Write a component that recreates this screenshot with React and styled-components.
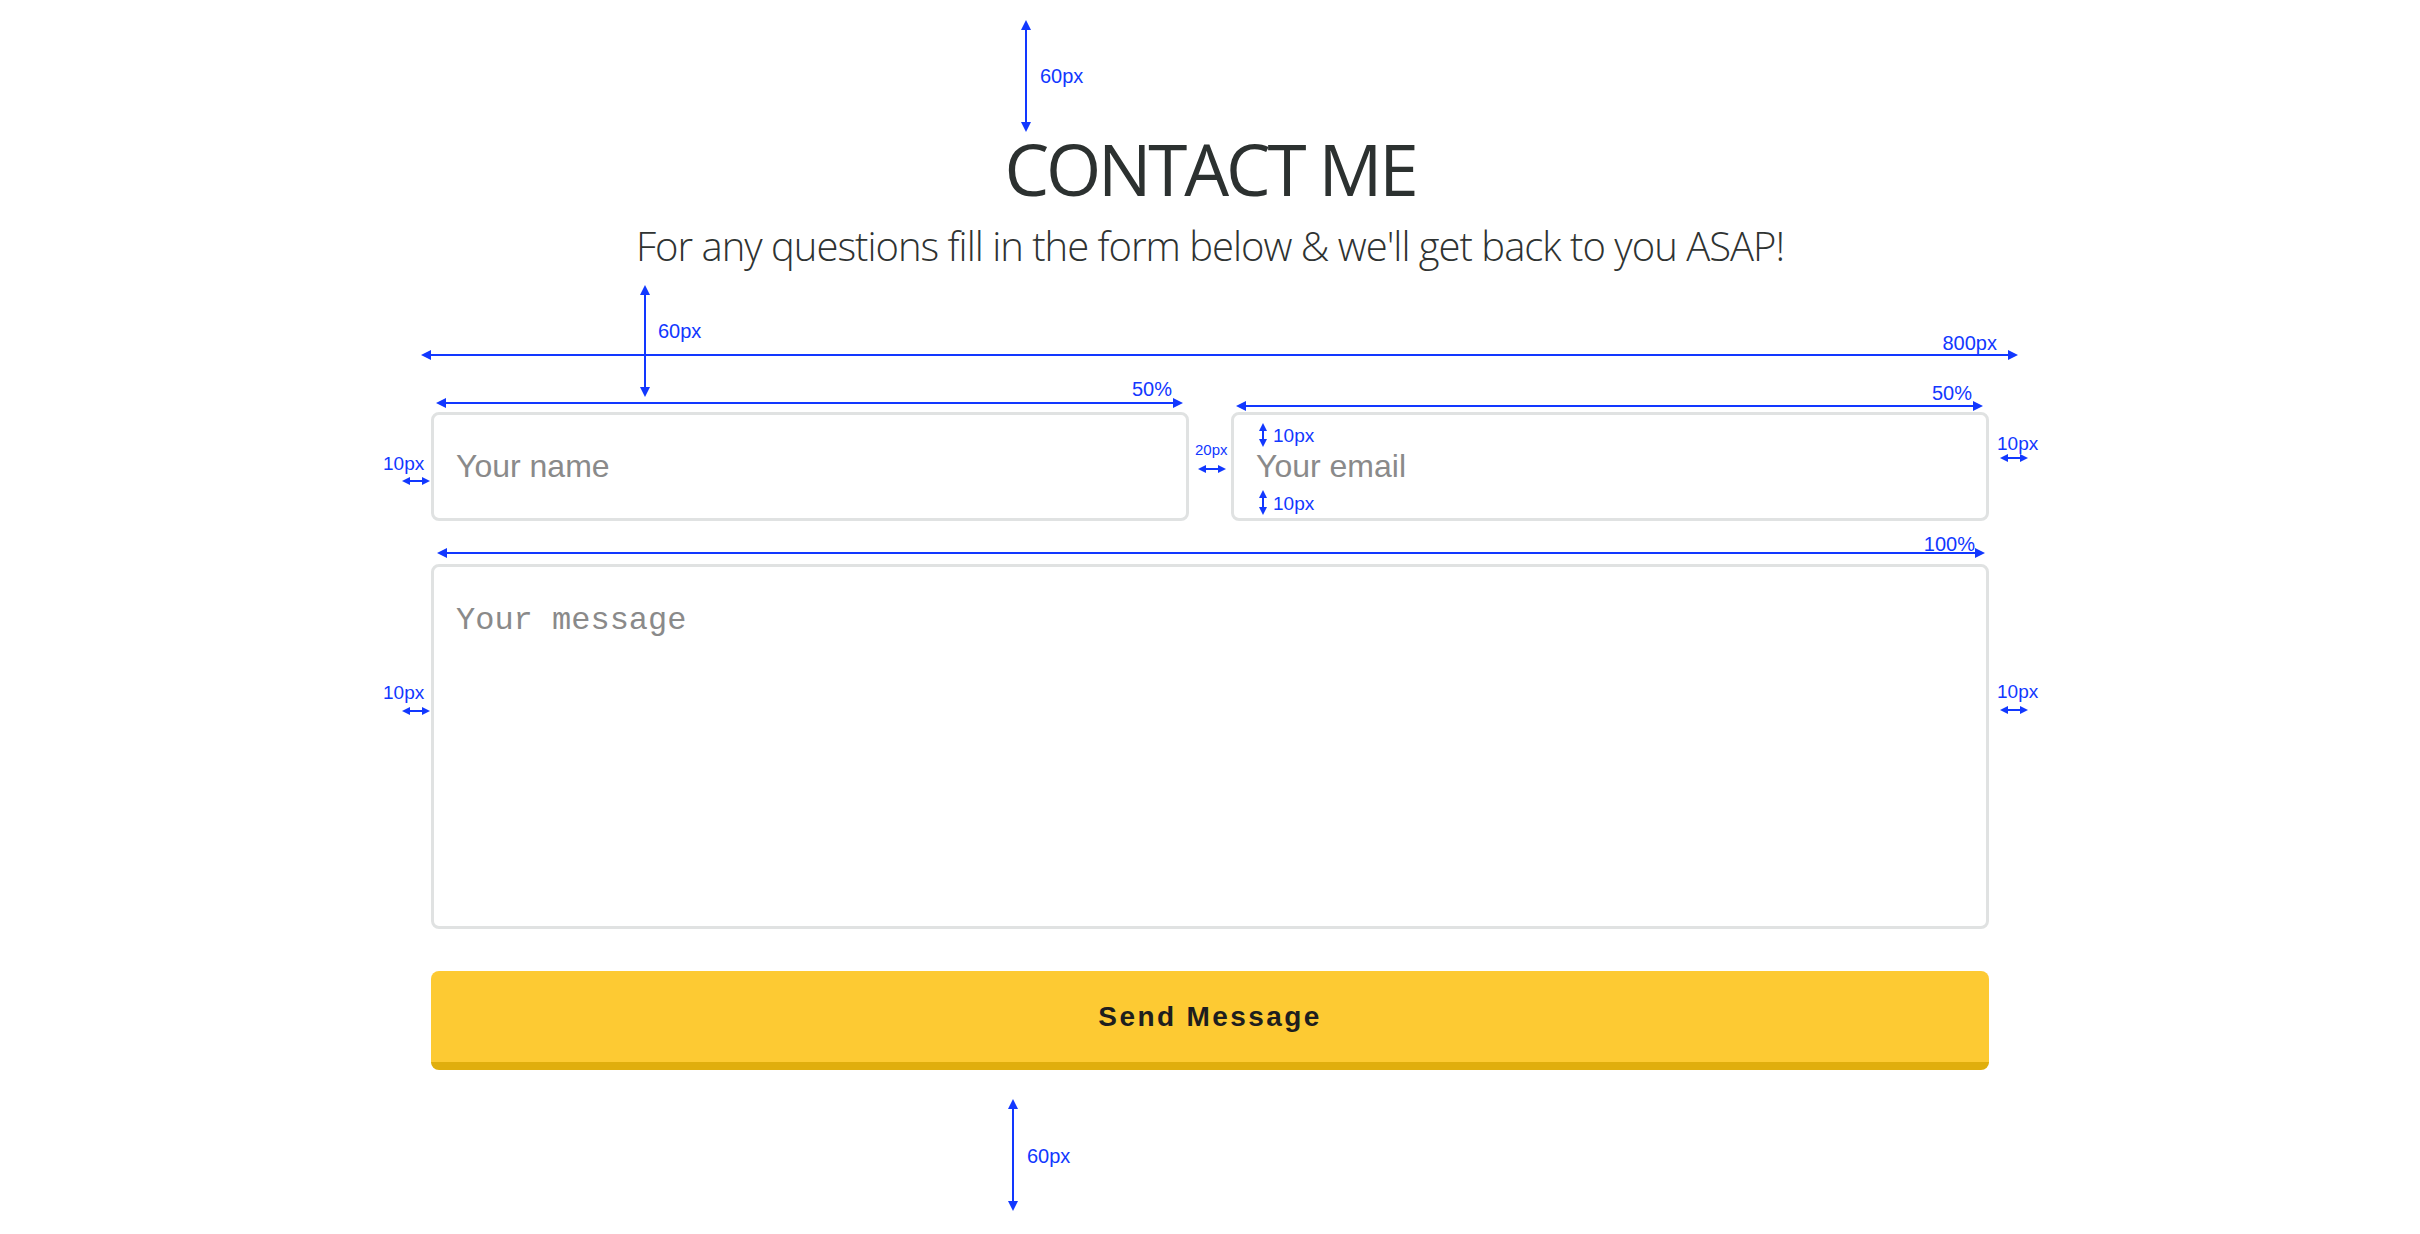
import React from "react";
import styled, { createGlobalStyle } from "styled-components";

const GlobalStyle = createGlobalStyle`
  html, body { margin: 0; padding: 0; background: #ffffff; }
  * { box-sizing: border-box; }
`;

const Page = styled.div`
  position: relative;
  width: 100%;
  height: 1234px;
  padding-top: 133px;
  font-family: "Open Sans", "Liberation Sans", sans-serif;
  overflow: hidden;
`;

const Header = styled.header`
  display: flex;
  flex-direction: column;
  align-items: center;
  gap: 22px;
`;

const Title = styled.h1`
  margin: 0;
  font-family: "Open Sans", sans-serif;
  font-weight: 400;
  font-size: 71px;
  line-height: 1;
  color: #2c3130;
  letter-spacing: -3.2px;
`;

const Subtitle = styled.p`
  margin: 0;
  font-family: "Open Sans", sans-serif;
  font-weight: 300;
  font-size: 40px;
  line-height: 1;
  color: #2f3332;
  letter-spacing: -1px;
`;

const Form = styled.form`
  width: 1558px;
  margin: 146px auto 0;
  display: flex;
  flex-direction: column;
  gap: 43px;
`;

const Row = styled.div`
  display: grid;
  grid-template-columns: 1fr 1fr;
  gap: 42px;
`;

const fieldBase = `
  width: 100%;
  border: 3px solid #e0e2e2;
  border-radius: 8px;
  background: #fff;
  outline: none;
  color: #333;
`;

const Input = styled.input`
  ${fieldBase}
  height: 109px;
  padding: 0 22px;
  font-family: "Liberation Sans", Arial, sans-serif;
  font-size: 32px;
  &::placeholder { color: #8a8a8a; }
`;

const Message = styled.textarea`
  ${fieldBase}
  display: block;
  height: 365px;
  padding: 35px 22px;
  resize: none;
  font-family: "Liberation Mono", "Courier New", monospace;
  font-size: 32px;
  &::placeholder { color: #8a8a8a; }
`;

const SendButton = styled.button`
  height: 99px;
  margin-top: -1px;
  border: none;
  border-bottom: 8px solid #e0ae0d;
  border-radius: 8px;
  background: #fdca33;
  color: #1e1e1e;
  font-family: "Liberation Sans", Arial, sans-serif;
  font-weight: 700;
  font-size: 28px;
  letter-spacing: 2.4px;
  cursor: pointer;
`;

const Overlay = styled.svg`
  position: absolute;
  left: 0;
  top: 0;
  width: 2420px;
  height: 1234px;
  pointer-events: none;
`;

const Label = styled.text`
  font-family: "Liberation Sans", Arial, sans-serif;
  font-size: ${(p) => p.$size || 19}px;
  fill: #1238ff;
`;

const BLUE = "#1238ff";

function HArrow({ x1, x2, y, head = 10, w = 10 }) {
  return (
    <g>
      <line x1={x1 + head - 1} x2={x2 - head + 1} y1={y} y2={y} stroke={BLUE} strokeWidth="2" />
      <polygon points={`${x1},${y} ${x1 + head},${y - w / 2} ${x1 + head},${y + w / 2}`} fill={BLUE} />
      <polygon points={`${x2},${y} ${x2 - head},${y - w / 2} ${x2 - head},${y + w / 2}`} fill={BLUE} />
    </g>
  );
}

function VArrow({ x, y1, y2, head = 10, w = 10 }) {
  return (
    <g>
      <line x1={x} x2={x} y1={y1 + head - 1} y2={y2 - head + 1} stroke={BLUE} strokeWidth="2" />
      <polygon points={`${x},${y1} ${x - w / 2},${y1 + head} ${x + w / 2},${y1 + head}`} fill={BLUE} />
      <polygon points={`${x},${y2} ${x - w / 2},${y2 - head} ${x + w / 2},${y2 - head}`} fill={BLUE} />
    </g>
  );
}

function Annotations() {
  return (
    <Overlay viewBox="0 0 2420 1234">
      <VArrow x={1026} y1={20} y2={132} />
      <Label x={1040} y={83} $size={20}>60px</Label>

      <VArrow x={645} y1={285} y2={397} />
      <Label x={658} y={338} $size={20}>60px</Label>

      <HArrow x1={421} x2={2018} y={355} />
      <Label x={1997} y={350} $size={20} textAnchor="end">800px</Label>

      <HArrow x1={436} x2={1183} y={403} />
      <Label x={1172} y={396} $size={20} textAnchor="end">50%</Label>

      <HArrow x1={1236} x2={1983} y={406} />
      <Label x={1972} y={400} $size={20} textAnchor="end">50%</Label>

      <HArrow x1={402} x2={430} y={481} head={8} w={8} />
      <Label x={383} y={470}>10px</Label>

      <HArrow x1={1198} x2={1226} y={469} head={8} w={8} />
      <Label x={1195} y={455} $size={15}>20px</Label>

      <VArrow x={1263} y1={423} y2={447} head={8} w={8} />
      <Label x={1273} y={442}>10px</Label>
      <VArrow x={1263} y1={490} y2={515} head={8} w={8} />
      <Label x={1273} y={510}>10px</Label>

      <HArrow x1={2000} x2={2028} y={458} head={8} w={8} />
      <Label x={1997} y={450}>10px</Label>

      <HArrow x1={437} x2={1985} y={553} />
      <Label x={1975} y={551} $size={20} textAnchor="end">100%</Label>

      <HArrow x1={402} x2={430} y={711} head={8} w={8} />
      <Label x={383} y={699}>10px</Label>

      <HArrow x1={2000} x2={2028} y={710} head={8} w={8} />
      <Label x={1997} y={698}>10px</Label>

      <VArrow x={1013} y1={1099} y2={1211} />
      <Label x={1027} y={1163} $size={20}>60px</Label>
    </Overlay>
  );
}

export default function App() {
  return (
    <>
      <GlobalStyle />
      <Page>
        <Header>
          <Title>CONTACT ME</Title>
          <Subtitle>For any questions fill in the form below &amp; we'll get back to you ASAP!</Subtitle>
        </Header>
        <Form onSubmit={(e) => e.preventDefault()}>
          <Row>
            <Input type="text" placeholder="Your name" />
            <Input type="email" placeholder="Your email" />
          </Row>
          <Message placeholder="Your message" />
          <SendButton type="submit">Send Message</SendButton>
        </Form>
        <Annotations />
      </Page>
    </>
  );
}
